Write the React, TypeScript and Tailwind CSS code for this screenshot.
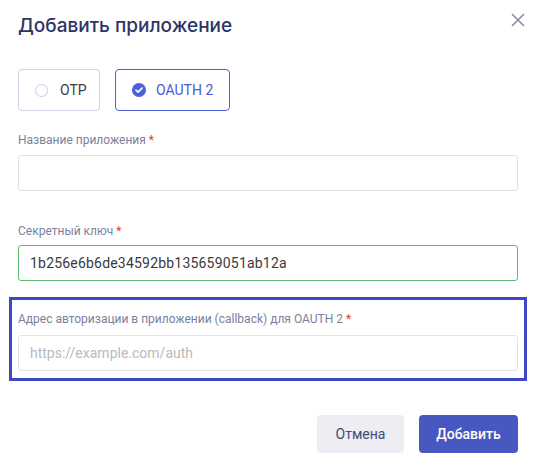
import { useState } from 'react'

function Label({ text }: { text: string }) {
  return (
    <p className="text-[12px] leading-4 text-[#7b7f9c]">
      {text} <span className="text-[#e5383b]">*</span>
    </p>
  )
}

export default function App() {
  const [mode, setMode] = useState<'otp' | 'oauth'>('oauth')
  const [name, setName] = useState('')
  const [secret, setSecret] = useState('1b256e6b6de34592bb135659051ab12a')
  const [callback, setCallback] = useState('')

  return (
    <div className="w-[540px] h-[471px] bg-white relative font-['Roboto',sans-serif]">
      <button className="absolute right-[15px] top-[13px] text-[#8a8ca6]">
        <svg width="14" height="14" viewBox="0 0 14 14" fill="none" stroke="currentColor" strokeWidth="1.6">
          <path d="M1 1L13 13M13 1L1 13" />
        </svg>
      </button>

      <div className="pl-[18px] pr-[22px] pt-[12px]">
        <h2 className="text-[19px] leading-7 font-medium text-[#2d3468] font-['Inter',sans-serif]">
          Добавить приложение
        </h2>

        <div className="flex gap-[15px] mt-[29px]">
          <button
            onClick={() => setMode('otp')}
            className={`h-[42px] w-[82px] flex items-center gap-[12px] pl-[16px] rounded-[4px] border ${
              mode === 'otp' ? 'border-[#4b5fd6] text-[#4b5ad0]' : 'border-[#cfd2e8] text-[#3c3c44]'
            }`}
          >
            <span
              className={`w-[13px] h-[13px] rounded-full border ${
                mode === 'otp' ? 'border-[#4d5fd9] bg-[#4d5fd9]' : 'border-[#c8cbea]'
              }`}
            />
            <span className="text-[14px]">OTP</span>
          </button>
          <button
            onClick={() => setMode('oauth')}
            className={`h-[42px] w-[115px] flex items-center gap-[10px] pl-[16px] rounded-[4px] border ${
              mode === 'oauth' ? 'border-[#4b5fd6] text-[#4b5ad0]' : 'border-[#cfd2e8] text-[#3c3c44]'
            }`}
          >
            {mode === 'oauth' ? (
              <svg width="14" height="14" viewBox="0 0 14 14">
                <circle cx="7" cy="7" r="7" fill="#4d5fd9" />
                <path d="M4 7.2L6.1 9.2L10 5.2" fill="none" stroke="white" strokeWidth="1.7" strokeLinecap="round" strokeLinejoin="round" />
              </svg>
            ) : (
              <span className="w-[13px] h-[13px] rounded-full border border-[#c8cbea]" />
            )}
            <span className="text-[14px]">OAUTH 2</span>
          </button>
        </div>

        <div className="mt-[21px]">
          <Label text="Название приложения" />
          <input
            value={name}
            onChange={e => setName(e.target.value)}
            className="mt-[7px] w-full h-[36px] rounded-[3px] border border-[#e1e2e8] px-[11px] text-[14px] text-[#333] outline-none"
          />
        </div>

        <div className="mt-[32px]">
          <Label text="Секретный ключ" />
          <input
            value={secret}
            onChange={e => setSecret(e.target.value)}
            className="mt-[6px] w-full h-[36px] rounded-[3px] border border-[#5cbb6c] px-[11px] text-[14px] text-[#3a3a3a] tracking-[0.2px] outline-none"
          />
        </div>
      </div>

      <div className="mx-[9px] mt-[16px] w-[518px] h-[84px] border-[3px] border-[#3f47c9] px-[6px] pt-[11px]">
        <Label text="Адрес авторизации в приложении (callback) для OAUTH 2" />
        <input
          value={callback}
          onChange={e => setCallback(e.target.value)}
          placeholder="https://example.com/auth"
          className="mt-[8px] w-full h-[36px] rounded-[3px] border border-[#e1e2e8] px-[11px] text-[14px] text-[#333] placeholder-[#b9b9bf] outline-none"
        />
      </div>

      <div className="flex justify-end gap-[15px] px-[22px] mt-[34px]">
        <button className="h-[38px] w-[87px] rounded-[4px] bg-[#ededf3] text-[14px] text-[#434a78]">Отмена</button>
        <button className="h-[38px] w-[99px] rounded-[4px] bg-[#4759c0] text-[14px] font-medium text-white">Добавить</button>
      </div>
    </div>
  )
}
